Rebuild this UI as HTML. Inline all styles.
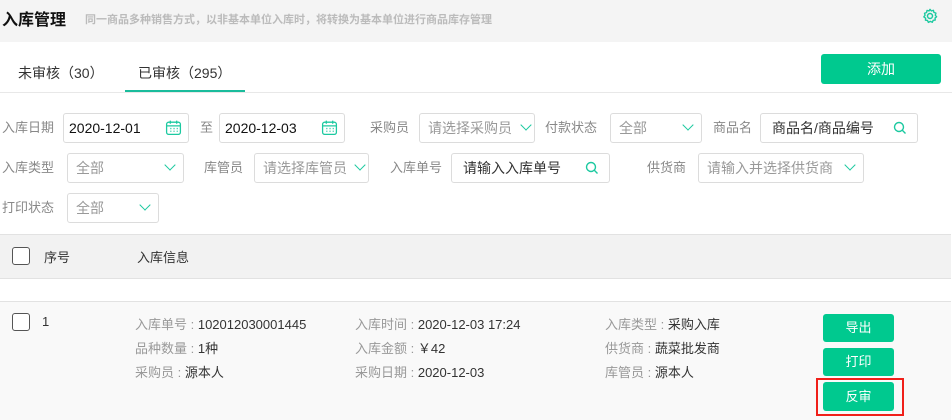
<!DOCTYPE html>
<html><head><meta charset="utf-8"><style>
*{box-sizing:border-box;margin:0;padding:0}
body{width:952px;height:420px;overflow:hidden;background:#fff;font-family:"Liberation Sans","Noto Sans CJK SC",sans-serif;font-size:13px;color:#333;position:relative}
.a{position:absolute;white-space:nowrap}
.hd{left:0;top:0;width:952px;height:42px;background:#f4f4f4}
.inp{position:absolute;height:30px;border:1px solid #dcdcdc;border-radius:3px;background:#fff;line-height:28px;padding-left:8px;color:#999;font-size:14px;white-space:nowrap;overflow:hidden}
.lbl{position:absolute;color:#888;font-size:13px;line-height:30px}
.chev{position:absolute;right:9px;top:7px;width:8px;height:8px;border-right:1.6px solid #1cc9a0;border-bottom:1.6px solid #1cc9a0;transform:rotate(45deg)}
.btn{position:absolute;background:#00c98f;color:#fff;border-radius:3px;text-align:center;font-size:13px}
.g{color:#999}
</style></head><body>
<div class="a hd"></div>
<div class="a" style="left:2px;top:6px;font-size:16px;font-weight:bold;color:#111">入库管理</div>
<div class="a" style="left:85px;top:11px;font-size:11px;color:#bbb;font-weight:bold">同一商品多种销售方式，以非基本单位入库时，将转换为基本单位进行商品库存管理</div>
<svg class="a" style="left:922px;top:8px" width="16" height="16" viewBox="0 0 14 14"><circle cx="7" cy="7" r="2.2" fill="none" stroke="#1cc9a0" stroke-width="1.3"/><path d="M7 1.2 L8.2 2.6 L10 2 L10.4 3.8 L12.2 4.5 L11.6 6.3 L12.8 7.6 L11.4 8.8 L11.6 10.6 L9.8 10.8 L9 12.5 L7.3 11.7 L5.6 12.6 L4.8 10.9 L3 10.7 L3.2 8.9 L1.6 7.8 L2.7 6.3 L2.2 4.6 L4 3.9 L4.4 2.1 L6.2 2.6 Z" fill="none" stroke="#1cc9a0" stroke-width="1.2" stroke-linejoin="round"/></svg>
<div class="a" style="left:18px;top:63px;font-size:14px">未审核（30）</div>
<div class="a" style="left:138px;top:63px;font-size:14px">已审核（295）</div>
<div class="a" style="left:0;top:92px;width:952px;height:1px;background:#e8e8e8"></div>
<div class="a" style="left:125px;top:90px;width:120px;height:2px;background:#1abc9c"></div>
<div class="btn" style="left:821px;top:54px;width:120px;height:30px;line-height:30px;font-size:14px">添加</div>

<div class="lbl" style="left:2px;top:113px">入库日期</div>
<div class="inp" style="left:63px;top:113px;width:126px;color:#111;padding-left:5px">2020-12-01<svg style="position:absolute;right:6px;top:5px" width="17" height="17" viewBox="0 0 16 16"><rect x="1.5" y="3" width="13" height="11.5" rx="2" fill="none" stroke="#1cc9a0" stroke-width="1.2"/><path d="M5 1.5v3M11 1.5v3M1.5 6.5h13" stroke="#1cc9a0" stroke-width="1.2"/><path d="M5 9h1M8 9h1M11 9h1M5 11.5h1M8 11.5h1M11 11.5h1" stroke="#1cc9a0" stroke-width="1.2"/></svg></div>
<div class="lbl" style="left:200px;top:113px">至</div>
<div class="inp" style="left:219px;top:113px;width:126px;color:#111;padding-left:5px">2020-12-03<svg style="position:absolute;right:6px;top:5px" width="17" height="17" viewBox="0 0 16 16"><rect x="1.5" y="3" width="13" height="11.5" rx="2" fill="none" stroke="#1cc9a0" stroke-width="1.2"/><path d="M5 1.5v3M11 1.5v3M1.5 6.5h13" stroke="#1cc9a0" stroke-width="1.2"/><path d="M5 9h1M8 9h1M11 9h1M5 11.5h1M8 11.5h1M11 11.5h1" stroke="#1cc9a0" stroke-width="1.2"/></svg></div>
<div class="lbl" style="left:370px;top:113px">采购员</div>
<div class="inp" style="left:419px;top:113px;width:116px">请选择采购员<span class="chev" style="right:4px"></span></div>
<div class="lbl" style="left:545px;top:113px">付款状态</div>
<div class="inp" style="left:610px;top:113px;width:92px">全部<span class="chev"></span></div>
<div class="lbl" style="left:713px;top:113px">商品名</div>
<div class="inp" style="left:760px;top:113px;width:158px;color:#333;padding-left:11px">商品名/商品编号<svg style="position:absolute;right:10px;top:7px" width="14" height="14" viewBox="0 0 14 14"><circle cx="6" cy="6" r="4.5" fill="none" stroke="#1cc9a0" stroke-width="1.4"/><path d="M9.3 9.3L12.5 12.5" stroke="#1cc9a0" stroke-width="1.4"/></svg></div>

<div class="lbl" style="left:2px;top:153px">入库类型</div>
<div class="inp" style="left:67px;top:153px;width:117px">全部<span class="chev"></span></div>
<div class="lbl" style="left:204px;top:153px">库管员</div>
<div class="inp" style="left:254px;top:153px;width:115px">请选择库管员<span class="chev" style="right:4px"></span></div>
<div class="lbl" style="left:390px;top:153px">入库单号</div>
<div class="inp" style="left:451px;top:153px;width:159px;color:#333;padding-left:11px">请输入入库单号<svg style="position:absolute;right:10px;top:7px" width="14" height="14" viewBox="0 0 14 14"><circle cx="6" cy="6" r="4.5" fill="none" stroke="#1cc9a0" stroke-width="1.4"/><path d="M9.3 9.3L12.5 12.5" stroke="#1cc9a0" stroke-width="1.4"/></svg></div>
<div class="lbl" style="left:647px;top:153px">供货商</div>
<div class="inp" style="left:698px;top:153px;width:166px">请输入并选择供货商<span class="chev"></span></div>

<div class="lbl" style="left:2px;top:193px">打印状态</div>
<div class="inp" style="left:67px;top:193px;width:92px">全部<span class="chev"></span></div>

<div class="a" style="left:0;top:234px;width:951px;height:45px;background:#f2f2f2;border-top:1px solid #e2e2e2;border-bottom:1px solid #e2e2e2"></div>
<div class="a" style="left:12px;top:247px;width:18px;height:18px;border:1.5px solid #555;border-radius:3px;background:#fff"></div>
<div class="a" style="left:44px;top:247px">序号</div>
<div class="a" style="left:137px;top:247px">入库信息</div>

<div class="a" style="left:0;top:301px;width:951px;height:119px;background:#f9f9f9;border-top:1px solid #e2e2e2"></div>
<div class="a" style="left:12px;top:313px;width:18px;height:18px;border:1.5px solid #555;border-radius:3px;background:#fff"></div>
<div class="a" style="left:42px;top:314px">1</div>
<div class="a" style="left:135px;top:314px"><span class="g">入库单号 : </span>102012030001445</div>
<div class="a" style="left:135px;top:338px"><span class="g">品种数量 : </span>1种</div>
<div class="a" style="left:135px;top:362px"><span class="g">采购员 : </span>源本人</div>
<div class="a" style="left:355px;top:314px"><span class="g">入库时间 : </span>2020-12-03 17:24</div>
<div class="a" style="left:355px;top:338px"><span class="g">入库金额 : </span>￥42</div>
<div class="a" style="left:355px;top:362px"><span class="g">采购日期 : </span>2020-12-03</div>
<div class="a" style="left:605px;top:314px"><span class="g">入库类型 : </span>采购入库</div>
<div class="a" style="left:605px;top:338px"><span class="g">供货商 : </span>蔬菜批发商</div>
<div class="a" style="left:605px;top:362px"><span class="g">库管员 : </span>源本人</div>
<div class="btn" style="left:823px;top:314px;width:71px;height:28px;line-height:28px">导出</div>
<div class="btn" style="left:823px;top:348px;width:71px;height:28px;line-height:28px">打印</div>
<div class="a" style="left:816px;top:378px;width:88px;height:38px;border:2px solid #f0201a"></div>
<div class="btn" style="left:823px;top:382px;width:71px;height:29px;line-height:29px">反审</div>
</body></html>
